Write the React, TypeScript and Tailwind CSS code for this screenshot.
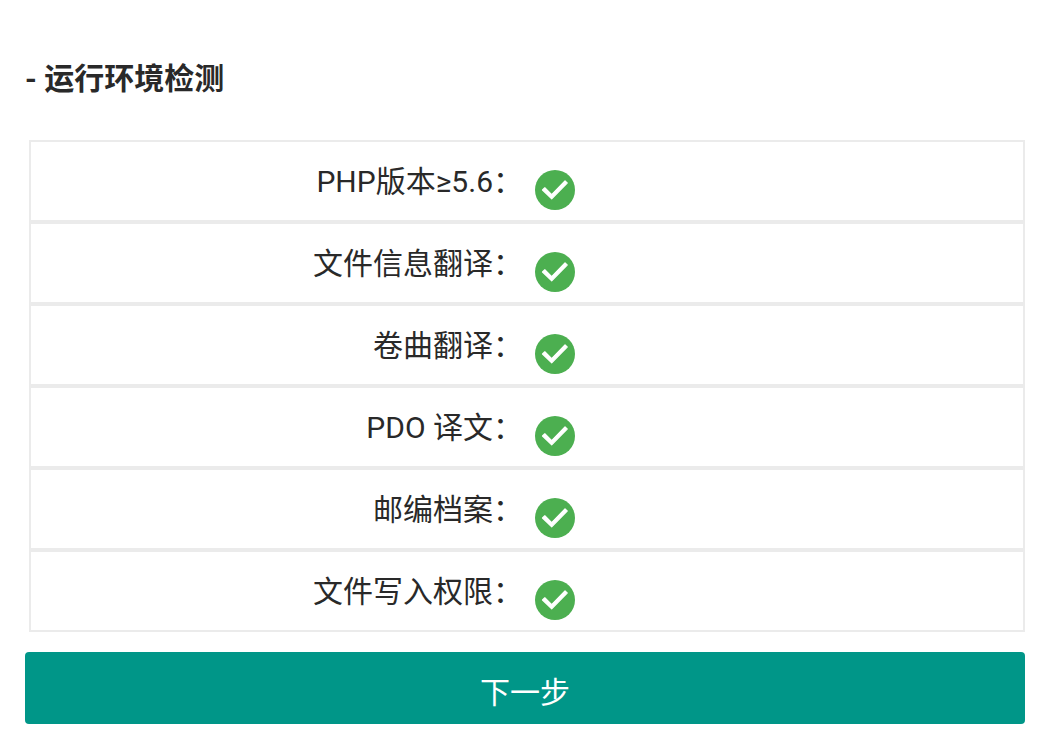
const rows = ["PHP版本≥5.6", "文件信息翻译", "卷曲翻译", "PDO 译文", "邮编档案", "文件写入权限"];

function Check() {
  return (
    <svg viewBox="0 0 40 40" className="w-10 h-10 mt-7 shrink-0">
      <circle cx="20" cy="20" r="20" fill="#4caf50" />
      <path d="M7.5 20 L9.8 17.8 L16.7 24.6 L30 10.8 L32.2 13 L16.7 28.8 Z" fill="#fff" stroke="#fff" strokeWidth="1.2" strokeLinejoin="round" />
    </svg>
  );
}

export default function App() {
  return (
    <div className="w-[1052px] h-[741px] bg-white overflow-hidden text-[#292929] font-['Roboto','Noto_Sans_CJK_SC',sans-serif]">
      <h1 className="pt-[59px] pl-[25px] h-[140px] text-[30px] leading-[40px] font-bold">- 运行环境检测</h1>
      <div className="ml-[29px] w-[996px] flex flex-col">
        {rows.map((r) => (
          <div key={r} className="h-[82px] border-2 border-[#ebebeb] flex">
            <div className="w-[492px] shrink-0 text-right text-[30px] leading-[40px] pt-5">
              {r}：
            </div>
            <div className="w-3 shrink-0" />
            <Check />
          </div>
        ))}
      </div>
      <button className="block mt-5 ml-[25px] w-[1000px] h-[72px] pt-2 bg-[#009688] rounded-[4px] text-white text-[30px]">下一步</button>
    </div>
  );
}
